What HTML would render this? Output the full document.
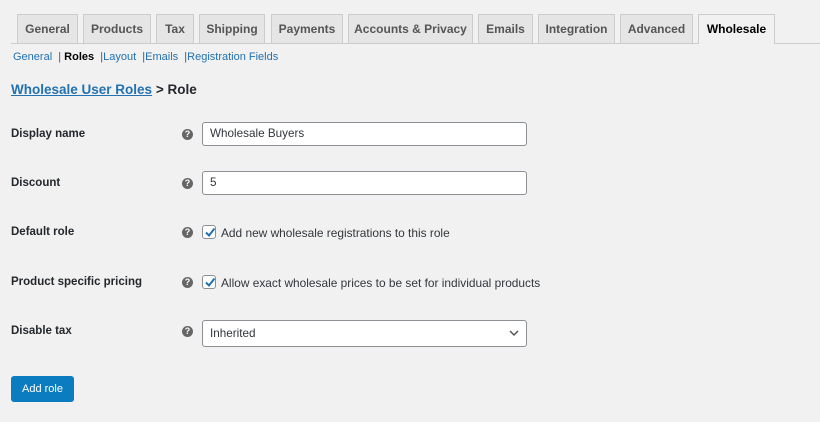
<!DOCTYPE html>
<html><head><meta charset="utf-8"><style>
*{margin:0;padding:0;box-sizing:border-box}
body{width:820px;height:422px;background:#f1f1f1;font-family:"Liberation Sans",sans-serif;font-size:12px;color:#23282d;position:relative;overflow:hidden}
.a{position:absolute;white-space:nowrap}
.tab{position:absolute;top:14px;height:29px;background:#e5e5e5;border:1px solid #ccc;border-bottom:none;font-weight:bold;color:#555;font-size:12px;line-height:28px;text-align:center}
.tab.on{background:#f1f1f1;color:#000;height:30px}
.line{position:absolute;left:11px;right:0;top:43px;border-top:1px solid #ccc}
.lbl{position:absolute;left:11px;font-weight:bold;font-size:11.5px;color:#23282d}
.q{position:absolute;left:182px;width:11px;height:11px;border-radius:50%;background:#666;color:#fff;font-size:9px;font-weight:bold;line-height:11px;text-align:center}
.inp{position:absolute;left:202px;width:325px;height:24px;background:#fff;border:1px solid #8c8f94;border-radius:3px;padding-left:7px;line-height:22px;font-size:11.7px;color:#32373c}
.cb{position:absolute;left:202px;width:14px;height:14px;background:#fff;border:1px solid #8c8f94;border-radius:3px}
.cb svg{position:absolute;left:1px;top:0}
.sub a,.link{color:#2271b1;text-decoration:none}
</style></head><body>
<div class="line"></div>
<div class="tab" style="left:17px;width:61px">General</div>
<div class="tab" style="left:83px;width:68px">Products</div>
<div class="tab" style="left:156px;width:38px">Tax</div>
<div class="tab" style="left:199px;width:66px">Shipping</div>
<div class="tab" style="left:271px;width:72px">Payments</div>
<div class="tab" style="left:348px;width:125px">Accounts &amp; Privacy</div>
<div class="tab" style="left:478px;width:55px">Emails</div>
<div class="tab" style="left:538px;width:77px">Integration</div>
<div class="tab" style="left:620px;width:73px">Advanced</div>
<div class="tab on" style="left:698px;width:77px">Wholesale</div>

<div class="a sub" style="left:13px;top:51px;font-size:11px;color:#555"><a>General</a> &nbsp;| <b style="color:#000">Roles</b> &nbsp;|<a>Layout</a> &nbsp;|<a>Emails</a> &nbsp;|<a>Registration Fields</a></div>
<div class="a" style="left:11px;top:82px;font-size:13.5px;font-weight:bold;color:#23282d"><span class="link" style="text-decoration:underline">Wholesale User Roles</span> &gt; Role</div>

<div class="lbl" style="top:128px">Display name</div>
<div class="q" style="top:129px">?</div>
<div class="inp" style="top:122px">Wholesale Buyers</div>

<div class="lbl" style="top:177px">Discount</div>
<div class="q" style="top:178px">?</div>
<div class="inp" style="top:171px">5</div>

<div class="lbl" style="top:226px">Default role</div>
<div class="q" style="top:227px">?</div>
<div class="cb" style="top:225px"><svg width="12" height="12" viewBox="0 0 12 12"><path d="M2 6.5 L5 9.5 L10.5 2.5" stroke="#2271b1" stroke-width="2" fill="none"/></svg></div>
<div class="a" style="left:221px;top:226px;color:#32373c;font-size:11.9px">Add new wholesale registrations to this role</div>

<div class="lbl" style="top:276px">Product specific pricing</div>
<div class="q" style="top:277px">?</div>
<div class="cb" style="top:275px"><svg width="12" height="12" viewBox="0 0 12 12"><path d="M2 6.5 L5 9.5 L10.5 2.5" stroke="#2271b1" stroke-width="2" fill="none"/></svg></div>
<div class="a" style="left:221px;top:276px;color:#32373c;font-size:11.9px">Allow exact wholesale prices to be set for individual products</div>

<div class="lbl" style="top:325px">Disable tax</div>
<div class="q" style="top:326px">?</div>
<div class="inp" style="top:320px;height:27px;line-height:25px">Inherited
<svg style="position:absolute;right:7px;top:9px" width="10" height="7" viewBox="0 0 10 7"><path d="M1 1 L5 5 L9 1" stroke="#555" stroke-width="1.5" fill="none"/></svg></div>

<div class="a" style="left:11px;top:376px;width:63px;height:26px;background:#0a7cbf;border-radius:3px;color:#fff;text-align:center;line-height:26px;font-size:11px">Add role</div>
</body></html>
